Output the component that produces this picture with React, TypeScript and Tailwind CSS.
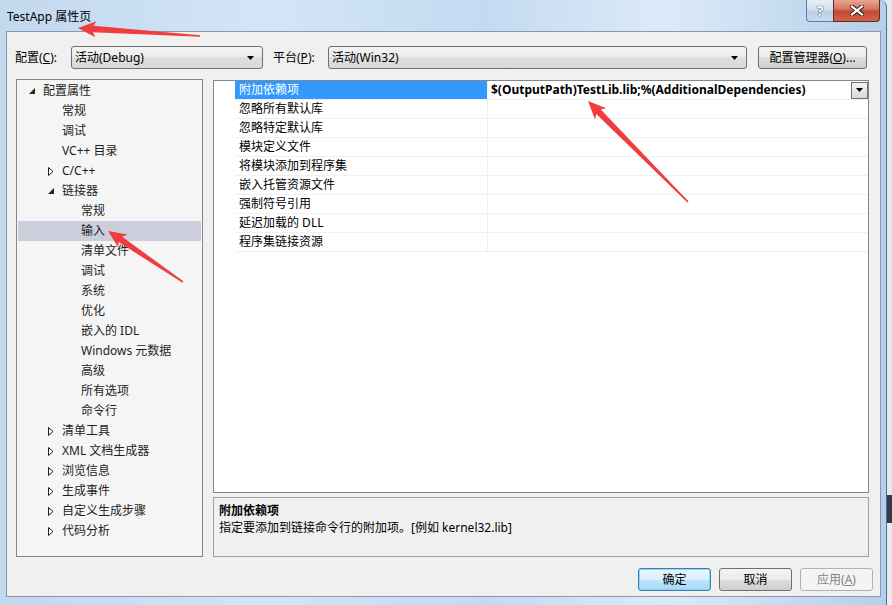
import React from 'react';

type TreeNode = {
  label: string;
  level: 0 | 1 | 2;
  mark?: 'open' | 'closed';
  selected?: boolean;
};

const tree: TreeNode[] = [
  { label: '配置属性', level: 0, mark: 'open' },
  { label: '常规', level: 1 },
  { label: '调试', level: 1 },
  { label: 'VC++ 目录', level: 1 },
  { label: 'C/C++', level: 1, mark: 'closed' },
  { label: '链接器', level: 1, mark: 'open' },
  { label: '常规', level: 2 },
  { label: '输入', level: 2, selected: true },
  { label: '清单文件', level: 2 },
  { label: '调试', level: 2 },
  { label: '系统', level: 2 },
  { label: '优化', level: 2 },
  { label: '嵌入的 IDL', level: 2 },
  { label: 'Windows 元数据', level: 2 },
  { label: '高级', level: 2 },
  { label: '所有选项', level: 2 },
  { label: '命令行', level: 2 },
  { label: '清单工具', level: 1, mark: 'closed' },
  { label: 'XML 文档生成器', level: 1, mark: 'closed' },
  { label: '浏览信息', level: 1, mark: 'closed' },
  { label: '生成事件', level: 1, mark: 'closed' },
  { label: '自定义生成步骤', level: 1, mark: 'closed' },
  { label: '代码分析', level: 1, mark: 'closed' },
];

const indent = ['w-[11px]', 'w-[30px]', 'w-[49px]'];

const props = [
  '附加依赖项',
  '忽略所有默认库',
  '忽略特定默认库',
  '模块定义文件',
  '将模块添加到程序集',
  '嵌入托管资源文件',
  '强制符号引用',
  '延迟加载的 DLL',
  '程序集链接资源',
];

// red annotation arrow, tip -> tail
function arrowPoints(tx: number, ty: number, ex: number, ey: number) {
  const dx = ex - tx;
  const dy = ey - ty;
  const len = Math.hypot(dx, dy);
  const ux = dx / len;
  const uy = dy / len;
  const px = -uy;
  const py = ux;
  const H = 18;
  const W = 8;
  const S = 3.2;
  const T = 0.8;
  const bx = tx + ux * H;
  const by = ty + uy * H;
  const nx = tx + ux * (H - 3);
  const ny = ty + uy * (H - 3);
  const pts = [
    [tx, ty],
    [bx + px * W, by + py * W],
    [nx + px * S, ny + py * S],
    [ex + px * T, ey + py * T],
    [ex - px * T, ey - py * T],
    [nx - px * S, ny - py * S],
    [bx - px * W, by - py * W],
  ];
  return pts.map(p => p.map(v => v.toFixed(1)).join(',')).join(' ');
}

function DownArrow() {
  return (
    <svg width="7" height="4" viewBox="0 0 7 4">
      <polygon points="0,0 7,0 3.5,4" fill="#000" />
    </svg>
  );
}

function Combo({ text, width }: { text: string; width: string }) {
  return (
    <div
      className={`${width} h-[23px] flex items-center rounded-[3px] border border-[#707070] bg-[linear-gradient(to_bottom,#f3f3f3_0%,#ebebeb_50%,#e0e0e0_50%,#d8d8d8_100%)] pl-[3px] pr-[8px]`}
    >
      <span className="flex-1">{text}</span>
      <DownArrow />
    </div>
  );
}

export default function App() {
  return (
    <div className="relative flex w-[892px] h-[605px] overflow-hidden bg-[#dfe5ec] text-[12px] leading-[16px] text-black font-['Noto_Sans','Noto_Sans_CJK_SC',sans-serif]">
      <div className="flex flex-col w-[887px] h-full rounded-tr-[7px] border-r border-[#5d6e84] bg-[linear-gradient(to_right,#c2d8ef_0%,#d3e5f7_30%,#c4daf1_55%,#dceaf8_75%,#b5cfea_100%)]">
        {/* title bar */}
        <div className="flex h-[31px] items-start">
          <span className="pl-[7px] pt-[9px] text-[12px] leading-[16px] text-black">TestApp 属性页</span>
          <div className="ml-auto mr-[6px] flex h-[22px]">
            <div className="w-[27px] h-full flex items-center justify-center rounded-bl-[4px] border border-t-0 border-r-0 border-[#687a94] bg-[linear-gradient(to_bottom,#e6eef8_0%,#d2e0ef_45%,#bccfe5_55%,#c9daee_100%)]">
              <span className="text-[14px] font-bold text-white [text-shadow:0_0_1px_#333,0_0_1px_#333]">?</span>
            </div>
            <div className="w-[47px] h-full flex items-center justify-center rounded-br-[4px] border border-t-0 border-[#5c2b24] bg-[linear-gradient(to_bottom,#e8a595_0%,#d57a64_40%,#c34a33_55%,#d1644c_100%)]">
              <svg width="14" height="11" viewBox="0 0 14 11">
                <path d="M2 1.5 L12 9.5 M12 1.5 L2 9.5" stroke="#3b2420" strokeWidth="4.2" strokeLinecap="square" />
                <path d="M2 1.5 L12 9.5 M12 1.5 L2 9.5" stroke="#ffffff" strokeWidth="2.2" strokeLinecap="square" />
              </svg>
            </div>
          </div>
        </div>

        {/* client area */}
        <div className="ml-[6px] mr-[5px] mb-[8px] flex-1 flex flex-col border border-[#8797ad] bg-[#f0f0f0]">
          {/* configuration row */}
          <div className="mt-[14px] h-[23px] flex items-center pl-[8px]">
            <span className="w-[56px]">
              配置(<span className="underline">C</span>):
            </span>
            <Combo text="活动(Debug)" width="w-[192px]" />
            <span className="ml-[10px] w-[55px]">
              平台(<span className="underline">P</span>):
            </span>
            <Combo text="活动(Win32)" width="w-[419px]" />
            <div className="ml-[11px] w-[109px] h-[23px] flex items-center justify-center rounded-[3px] border border-[#707070] bg-[linear-gradient(to_bottom,#f3f3f3_0%,#ebebeb_50%,#dddddd_50%,#cfcfcf_100%)]">
              配置管理器(<span className="underline">O</span>)...
            </div>
          </div>

          {/* main area */}
          <div className="mt-[10px] h-[478px] flex pl-[9px]">
            {/* tree */}
            <div className="w-[187px] h-full border border-[#828790] bg-[#f5f5f5] pt-px">
              {tree.map((n, i) => (
                <div
                  key={i}
                  className={`mx-px h-[20px] flex items-center text-[#1e1e1e] ${n.selected ? 'bg-[#cccedb]' : ''}`}
                >
                  <span className={indent[n.level]} />
                  <span className="w-[14px] flex items-center">
                    {n.mark === 'open' && (
                      <svg width="6" height="6" viewBox="0 0 6 6">
                        <polygon points="6,0 6,6 0,6" fill="#262626" />
                      </svg>
                    )}
                    {n.mark === 'closed' && (
                      <svg width="6" height="9" viewBox="0 0 6 9">
                        <polygon points="0.5,0.5 5,4.5 0.5,8.5" fill="#ffffff" stroke="#1e1e1e" strokeWidth="1" />
                      </svg>
                    )}
                  </span>
                  <span>{n.label}</span>
                </div>
              ))}
            </div>

            {/* right column */}
            <div className="ml-[10px] w-[656px] h-full flex flex-col">
              <div className="mt-px flex-1 border border-[#828790] bg-white flex">
                <div className="w-[21px]" />
                <div className="flex-1 flex flex-col">
                  {props.map((p, i) => (
                    <div key={p} className="h-[19px] flex border-b border-[#f0f0f0]">
                      <div
                        className={`w-[252px] flex items-center pl-[4px] ${i === 0 ? 'bg-[#3399ff] text-white' : ''}`}
                      >
                        {p}
                      </div>
                      <div className="flex-1 flex items-center border-l border-[#f0f0f0] pl-[3px]">
                        {i === 0 && (
                          <>
                            <span className="flex-1 font-bold">$(OutputPath)TestLib.lib;%(AdditionalDependencies)</span>
                            <div className="w-[17px] h-[17px] flex items-center justify-center border border-[#707070] bg-[linear-gradient(to_bottom,#f3f3f3_0%,#e6e6e6_50%,#d9d9d9_100%)]">
                              <DownArrow />
                            </div>
                          </>
                        )}
                      </div>
                    </div>
                  ))}
                </div>
              </div>
              <div className="mt-[4px] h-[60px] border border-[#a0a0a0] bg-[#f0f0f0] pl-[5px] pt-[4px] leading-[17px]">
                <div className="font-bold">附加依赖项</div>
                <div>指定要添加到链接命令行的附加项。[例如 kernel32.lib]</div>
              </div>
            </div>
          </div>

          {/* buttons */}
          <div className="mt-[11px] flex justify-end gap-[8px] pr-[7px]">
            <div className="w-[73px] h-[23px] flex items-center justify-center rounded-[3px] border border-[#3c7fb1] bg-[linear-gradient(to_bottom,#eaf6fd_0%,#d9f0fc_50%,#bee6fd_50%,#a7d9f5_100%)] shadow-[inset_0_0_0_1px_#8fd3f7]">
              确定
            </div>
            <div className="w-[73px] h-[23px] flex items-center justify-center rounded-[3px] border border-[#707070] bg-[linear-gradient(to_bottom,#f3f3f3_0%,#ebebeb_50%,#dddddd_50%,#cfcfcf_100%)]">
              取消
            </div>
            <div className="w-[73px] h-[23px] flex items-center justify-center rounded-[3px] border border-[#adb2b5] bg-[#f4f4f4] text-[#838383]">
              应用(<span className="underline">A</span>)
            </div>
          </div>
        </div>
      </div>

      {/* desktop edge */}
      <div className="flex-1 flex flex-col">
        <div className="h-[495px] bg-[#e4e9ef]" />
        <div className="h-[28px] bg-[#2f3b4d]" />
        <div className="flex-1 bg-[#e8ecf1]" />
      </div>

      {/* annotation arrows */}
      <svg className="absolute inset-0 pointer-events-none" width="892" height="605" viewBox="0 0 892 605">
        <polygon points={arrowPoints(78, 28, 200, 36)} fill="#f03c3c" />
        <polygon points={arrowPoints(588, 101, 688, 202)} fill="#f03c3c" />
        <polygon points={arrowPoints(108, 231, 183, 282)} fill="#f03c3c" />
      </svg>
    </div>
  );
}
